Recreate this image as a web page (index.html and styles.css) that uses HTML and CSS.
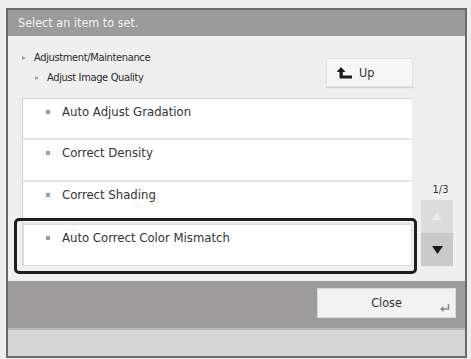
FILE: index.html
```html
<!DOCTYPE html>
<html>
<head>
<meta charset="utf-8">
<link rel="stylesheet" href="styles.css">
</head>
<body>
<div class="frame">
  <div class="title">Select an item to set.</div>
  <div class="content">
    <div class="head">
      <div class="crumbs">
        <div class="crumb c1"><span class="tri"></span>Adjustment/Maintenance</div>
        <div class="crumb c2"><span class="tri"></span>Adjust Image Quality</div>
      </div>
      <div class="up-btn">
        <svg class="up-icon" width="15" height="12" viewBox="0 0 15 12"><path d="M4 0 L8.5 5 L5.8 5 L5.8 8.5 L15 8.5 L15 11.5 L2.5 11.5 L2.5 5 L-0.5 5 Z" fill="#1c1c1c"/></svg>
        <span>Up</span>
      </div>
    </div>
    <div class="body">
      <ul class="list">
        <li class="row"><span class="dot"></span>Auto Adjust Gradation</li>
        <li class="row"><span class="dot"></span>Correct Density</li>
        <li class="row"><span class="dot"></span>Correct Shading</li>
        <li class="row sel"><span class="dot"></span>Auto Correct Color Mismatch</li>
      </ul>
      <div class="scroll">
        <div class="page">1/3</div>
        <div class="sbtn s-up"><svg width="10" height="7" viewBox="0 0 10 7"><path d="M5 0 L10 7 L0 7 Z" fill="#ebebeb"/></svg></div>
        <div class="sbtn s-down"><svg width="11" height="8" viewBox="0 0 11 8"><path d="M0 0 L11 0 L5.5 8 Z" fill="#1a1a1a"/></svg></div>
      </div>
    </div>
  </div>
  <div class="footer">
    <div class="close-btn">Close
      <svg class="enter" width="10" height="8" viewBox="0 0 10 8"><path d="M8.5 0 L8.5 5 L3 5" stroke="#8a8a8a" stroke-width="1.6" fill="none"/><path d="M0 5 L3.5 2 L3.5 8 Z" fill="#8a8a8a"/></svg>
    </div>
  </div>
  <div class="strip"></div>
</div>
</body>
</html>
```

FILE: styles.css
```css
* { box-sizing: border-box; }
body {
  margin: 0;
  background: #eeeeee;
  font-family: "DejaVu Sans Condensed", "DejaVu Sans", sans-serif;
  font-stretch: condensed;
  color: #333;
}
.frame {
  margin: 8px 0 0 6px;
  width: 461px;
  height: 350px;
  border: 2px solid #6a6a6a;
  display: flex;
  flex-direction: column;
  background: #efefef;
}
.title {
  height: 26px;
  background: #9b9b9b;
  color: #f3f3f3;
  font-size: 12.5px;
  line-height: 26px;
  padding-left: 10px;
}
.content {
  height: 245px;
  padding: 12px 12px 0 14px;
  display: flex;
  flex-direction: column;
}
.head {
  height: 50px;
  display: flex;
  justify-content: space-between;
  padding-right: 40px;
}
.crumb {
  height: 20px;
  line-height: 20px;
  font-size: 11px;
  color: #2a2a2a;
  display: flex;
  align-items: center;
  letter-spacing: -0.35px;
}
.c1 { padding-left: 0; }
.c2 { padding-left: 13px; }
.tri {
  width: 0; height: 0;
  border-left: 4px solid #a0a0a0;
  border-top: 2px solid transparent;
  border-bottom: 2px solid transparent;
  margin-right: 8px;
}
.up-btn {
  margin-top: 10px;
  width: 87px;
  height: 29px;
  background: #f6f6f6;
  border: 1px solid #e2e2e2;
  box-shadow: 0 1px 1px #d4d4d4;
  display: flex;
  align-items: center;
  padding-left: 10px;
  font-size: 12.5px;
  color: #333;
}
.up-icon { margin-right: 7px; }
.body {
  display: flex;
  height: 168px;
}
.list {
  list-style: none;
  margin: 0;
  padding: 0;
  width: 391px;
  background: #fff;
  border-left: 1px solid #d3d3d3;
  border-top: 1px solid #d3d3d3;
}
.row {
  height: 42px;
  padding: 5px 0 0 23px;
  line-height: 16px;
  font-size: 13px;
  color: #333;
  display: flex;
  align-items: flex-start;
  border-bottom: 2px solid #e6e6e6;
}
.row:first-child { height: 41px; }
.dot {
  width: 4px; height: 4px;
  background: #a0a0a0;
  margin: 6px 12px 0 0;
  flex: none;
}
.sel {
  position: relative;
  border-bottom: none;
  box-shadow: inset 0 0 0 1px #dcdcdc;
  padding-top: 6px;
}
.sel::after {
  content: "";
  position: absolute;
  top: -6px; bottom: -8px; left: -9px; right: -5px;
  border: 3px solid #1e1e1e;
  border-radius: 5px;
}
.scroll {
  margin-left: 9px;
  width: 32px;
  display: flex;
  flex-direction: column;
  justify-content: flex-end;
}
.page {
  font-size: 11px;
  text-align: center;
  line-height: 16px;
  margin-bottom: 2px;
  padding-left: 7px;
  color: #333;
}
.sbtn {
  height: 33px;
  display: flex;
  align-items: center;
  justify-content: center;
}
.s-up { background: #dddddd; }
.s-down { background: #c9c9c9; }
.footer {
  height: 47px;
  background: #9d9b9b;
  display: flex;
  justify-content: flex-end;
  padding: 7px 9px 0 0;
}
.close-btn {
  position: relative;
  width: 139px;
  height: 30px;
  background: #f2f2f2;
  border: 1px solid #dadada;
  font-size: 12.5px;
  line-height: 28px;
  text-align: center;
  color: #333;
}
.enter {
  position: absolute;
  right: 5px;
  bottom: 5px;
}
.strip {
  flex: 1;
  background: #d6d6d6;
  border-top: 2px solid #b9b9b9;
}
```
